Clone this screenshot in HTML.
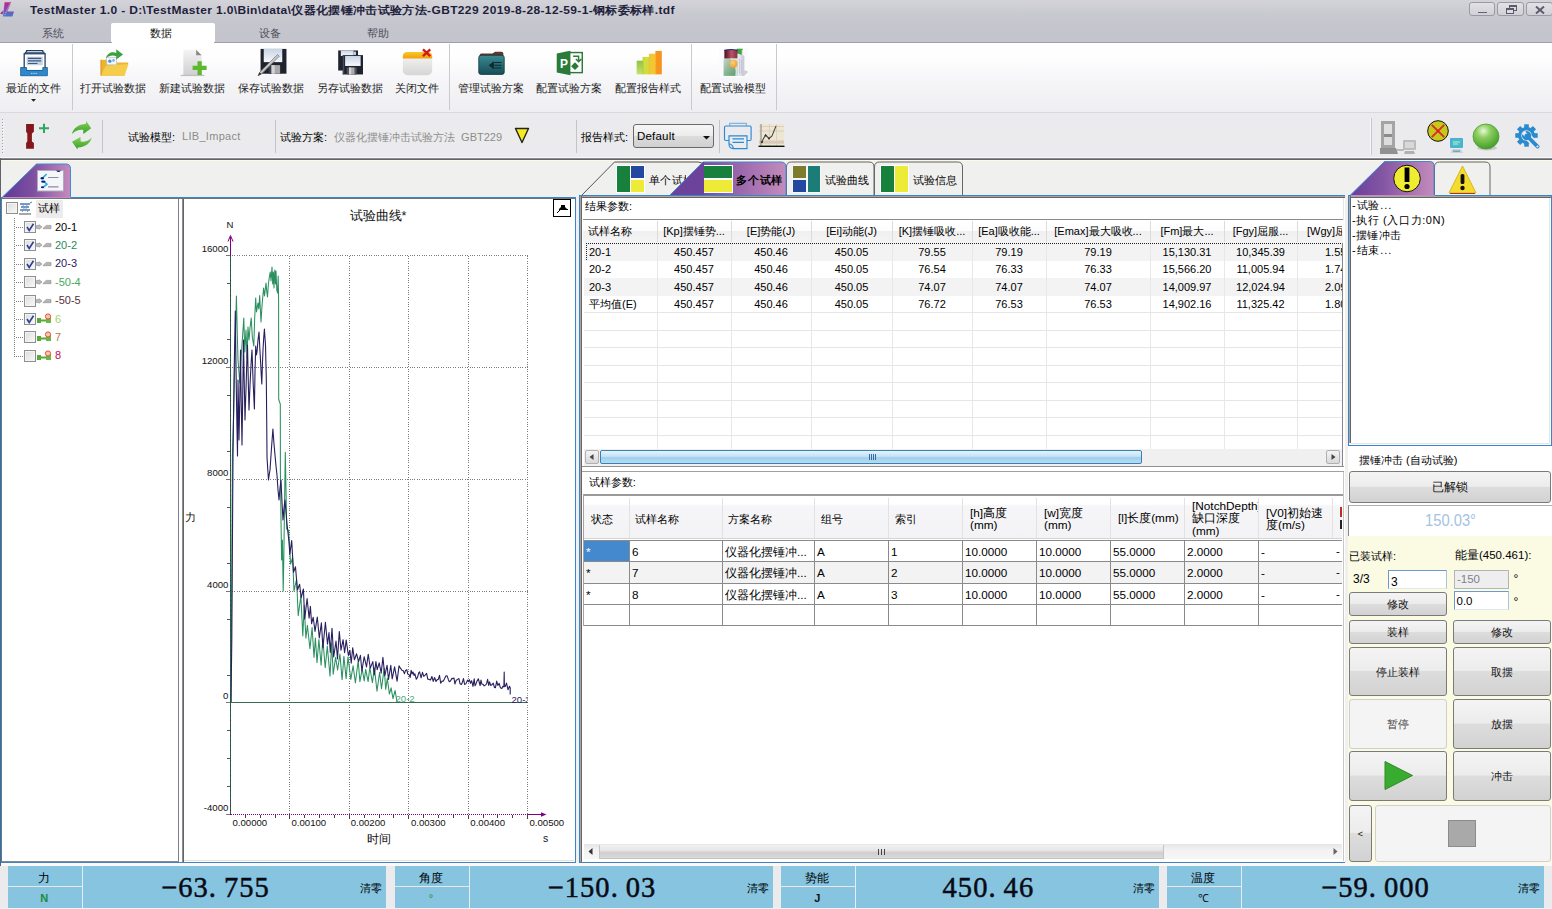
<!DOCTYPE html>
<html><head><meta charset="utf-8">
<style>
*{box-sizing:border-box;margin:0;padding:0}
html,body{width:1552px;height:909px;overflow:hidden;background:#f0f0ee}
body{position:relative;font-family:"Liberation Sans",sans-serif;font-size:11px;color:#000}
.a{position:absolute}
.t{position:absolute;white-space:nowrap;line-height:1}
/* ---------- title / ribbon ---------- */
#titlebar{left:0;top:0;width:1552px;height:43px;background:linear-gradient(#d3d3d9 0,#cacad1 12px,#c5c5cd 24px,#c4c4cc 43px)}
#title{left:30px;top:4.5px;font-size:11px;font-weight:bold;color:#1e1e3c;letter-spacing:.33px;transform:scaleX(1.09);transform-origin:0 0}
.wb{position:absolute;top:2px;height:14px;border:1px solid #9a9aa6;border-radius:3px;background:linear-gradient(#e2e2e6,#d0d0d6)}
.rtab{position:absolute;top:28px;font-size:11px;line-height:1;color:#4e4e5a}
#seltab{left:111px;top:23px;width:104px;height:20px;background:#fff;border-radius:2px 2px 0 0}
#ribbon{left:0;top:43px;width:1552px;height:69px;background:linear-gradient(#ffffff 0,#fefefe 22%,#f8f8fa 44%,#f3f3f6 70%,#efeff3 100%)}
#ribline{left:0;top:42px;width:1552px;height:1px;background:#a0a0ac}
.rsep{position:absolute;top:44px;width:1px;height:66px;background:#c9c9d0}
.rlab{position:absolute;top:83px;font-size:12px;color:#222;white-space:nowrap;line-height:1;transform:translateX(-50%)}
#toolbar{left:0;top:112px;width:1552px;height:46px;background:#ebebed;border-top:1px solid #d8d8de}
#tbline{left:0;top:157px;width:1552px;height:4px;background:linear-gradient(#f8f8f8 0 1px,#8a8c90 1px 2px,#606468 2px 3px,#fdf8e8 3px 4px)}
.tsep{position:absolute;top:120px;width:1px;height:33px;background:#c4c4c8}
/* ---------- panels ---------- */
.panel{position:absolute;background:#fff}
/* ---------- tables ---------- */
.c{position:absolute;white-space:nowrap;line-height:1;font-size:11px}
/* ---------- buttons ---------- */
.btn{position:absolute;border:1px solid #7a7a7a;border-radius:3px;background:linear-gradient(#f4f4f4 0,#ececec 48%,#dddddd 50%,#d2d2d2 100%);text-align:center;font-size:12px;color:#111}
.btn span{position:absolute;left:0;right:0;top:50%;transform:translateY(-50%);line-height:1}
/* ---------- status bar ---------- */
.sb{position:absolute;top:866px;height:42px;background:#86c4e0}
.sbl{position:absolute;font-size:12px;line-height:1;transform:translateX(-50%);white-space:nowrap}
.sbv{position:absolute;top:873.6px;font-family:"Liberation Serif",serif;font-size:28.5px;line-height:1;white-space:nowrap;letter-spacing:1.1px;color:#0a0a14;-webkit-text-stroke:.5px #0a0a14}
</style></head><body>

<!-- ======= TITLE BAR ======= -->
<div class="a" id="titlebar"></div>
<svg class="a" style="left:0;top:0" width="18" height="19" viewBox="0 0 18 19">
<defs><linearGradient id="lg1" x1="0" y1="0" x2="0" y2="1"><stop offset="0" stop-color="#b8288c"/><stop offset=".5" stop-color="#8a48b0"/><stop offset="1" stop-color="#3a80c8"/></linearGradient></defs>
<path d="M4.6 2.3 L11.2 2.3 L7.4 11.6 L14 11.6 L12.4 16.6 L3 16.6 Z" fill="url(#lg1)"/>
<path d="M0 13.6 L3.6 10.2 L2.6 14.6Z" fill="#a83098"/>
<path d="M10.2 3 L4.4 16.2" stroke="#fff" stroke-width=".8" stroke-dasharray="1 1" opacity=".85"/>
</svg>
<div class="t" id="title">TestMaster 1.0 - D:\TestMaster 1.0\Bin\data\仪器化摆锤冲击试验方法-GBT229 2019-8-28-12-59-1-钢标委标样.tdf</div>
<div class="wb" style="left:1469px;width:26px"><div class="a" style="left:8px;top:8.5px;width:9px;height:1.5px;background:#626272"></div></div>
<div class="wb" style="left:1497px;width:27px">
 <div class="a" style="left:11px;top:2px;width:8px;height:6px;border:1px solid #5a5a6a;border-top-width:2px"></div>
 <div class="a" style="left:8px;top:5px;width:8px;height:6px;border:1px solid #5a5a6a;border-top-width:2px;background:#dcdce2"></div>
</div>
<div class="wb" style="left:1526px;width:27px"><svg class="a" style="left:8px;top:3px" width="10" height="8" viewBox="0 0 10 8"><path d="M1 .5 L9 7.5 M9 .5 L1 7.5" stroke="#5a5a6a" stroke-width="1.9"/></svg></div>
<div class="a" id="seltab"></div>
<div class="rtab" style="left:42px">系统</div>
<div class="rtab" style="left:150px;color:#111">数据</div>
<div class="rtab" style="left:259px">设备</div>
<div class="rtab" style="left:367px">帮助</div>
<div class="a" id="ribline"></div>
<div class="a" style="left:112px;top:42px;width:102px;height:1px;background:#fff"></div>

<!-- ======= RIBBON ======= -->
<div class="a" id="ribbon"></div>
<div class="rsep" style="left:72px"></div>
<div class="rsep" style="left:449px"></div>
<div class="rsep" style="left:691px"></div>
<div class="rsep" style="left:776px"></div>
<div class="rlab" style="left:33px;font-size:11px">最近的文件</div>
<div class="rlab" style="left:113px;font-size:11px">打开试验数据</div>
<div class="rlab" style="left:192px;font-size:11px">新建试验数据</div>
<div class="rlab" style="left:271px;font-size:11px">保存试验数据</div>
<div class="rlab" style="left:349.5px;font-size:11px">另存试验数据</div>
<div class="rlab" style="left:417px;font-size:11px">关闭文件</div>
<div class="rlab" style="left:491px;font-size:11px">管理试验方案</div>
<div class="rlab" style="left:569px;font-size:11px">配置试验方案</div>
<div class="rlab" style="left:648px;font-size:11px">配置报告样式</div>
<div class="rlab" style="left:733px;font-size:11px">配置试验模型</div>
<svg class="a" style="left:31.3px;top:99.3px" width="5" height="3"><path d="M0 0H5L2.5 2.8Z" fill="#222"/></svg>
<svg class="a" style="left:17.299999999999997px;top:48.0px" width="31" height="31" viewBox="0 0 34 34"><path d="M10.5 6.5 V2.7 H28.3 V6.5" stroke="#1e3c64" fill="#fff" stroke-width="1.2"/><path d="M9.2 6.5 V4.6 H29.6 V6.5" stroke="#1e3c64" fill="#fff" stroke-width="1.2"/>
<rect x="7.9" y="6.3" width="22.9" height="18.7" fill="#fff" stroke="#1e3c64" stroke-width="1.4"/><rect x="10.5" y="9.5" width="17.8" height="9.4" fill="#c6d2e0"/>
<path d="M12 11.4 H26.5 M12 14.2 H26.5 M12 17 H22.5" stroke="#3a5a84" stroke-width="1.3"/>
<path d="M4 21.4 H10.5 V24.6 H28.3 V21.4 H33.3 V30.4 H4Z" fill="#2a8ad0" stroke="#1e5a90" stroke-width=".9"/><rect x="15.6" y="27.3" width="1.2" height="1.1" fill="#d6ebf8"/><rect x="18" y="27.3" width="1.2" height="1.1" fill="#d6ebf8"/><rect x="20.4" y="27.3" width="1.2" height="1.1" fill="#d6ebf8"/></svg>
<svg class="a" style="left:97.5px;top:48.0px" width="31" height="31" viewBox="0 0 34 34"><path d="M3 13 L3 30.4 L29 30.4 L33.4 16 L14 16 L12 13Z" fill="#e9b62e"/>
<rect x="9.5" y="10.5" width="11" height="8" fill="#f2f6fa" stroke="#a8b4c0" stroke-width=".6"/><circle cx="13" cy="14.5" r="1.8" fill="#4a90d0"/><circle cx="17" cy="13.6" r="1.4" fill="#7ab0e0"/>
<path d="M3 30.4 L8.5 19.5 L33.4 17.5 L29 30.4Z" fill="#f5cc4c"/><path d="M3.3 13 V30" stroke="#e08a20" stroke-width="1"/>
<path d="M8.5 11 C10.5 5 16 3.5 20 5.5 L20 1.5 L27.5 7 L20 12.5 L20 9 C16 7.5 12 8.5 8.5 11Z" fill="#3aa040"/></svg>
<svg class="a" style="left:176.5px;top:48.0px" width="31" height="31" viewBox="0 0 34 34"><defs><linearGradient id="pg" x1="0" y1="0" x2="0" y2="1"><stop offset="0" stop-color="#f4f4f4"/><stop offset="1" stop-color="#cfcfcf"/></linearGradient></defs>
<path d="M7 2 L21 2 L27 8 L27 29.5 L7 29.5Z" fill="url(#pg)"/><path d="M21 2 L27 8 L21 8Z" fill="#8a8a8a"/><rect x="4" y="29.5" width="26" height="1.3" fill="#bdbdbd"/>
<path d="M22.5 14.5 h4.6 v5 h5.4 v4.6 h-5.4 v5.4 h-4.6 v-5.4 h-5.4 v-4.6 h5.4Z" fill="#5cb82c"/></svg>
<svg class="a" style="left:255.5px;top:48.0px" width="31" height="31" viewBox="0 0 34 34"><defs><linearGradient id="lb" x1="0" y1="0" x2="0" y2="1"><stop offset="0" stop-color="#c8d4e6"/><stop offset="1" stop-color="#f6f8fb"/></linearGradient></defs>
<rect x="5" y="1" width="28.4" height="27.2" fill="#1f232d"/><rect x="8.5" y="1" width="20.3" height="14.5" fill="url(#lb)"/>
<rect x="14" y="18.8" width="13" height="9.4" fill="#3a3f4a"/><rect x="17" y="18.8" width="9.3" height="9.4" fill="#a9a9a9"/><rect x="17" y="18.8" width="3.5" height="9.4" fill="#d4d4d4"/>
<path d="M2.2 30.3 L4 26.5 L23.6 7.2 L25.6 9 L6 28.6Z" fill="#c4c4c4" stroke="#6e6e6e" stroke-width=".7"/><path d="M2 30.6 L4 26.5 L6 28.6Z" fill="#333"/></svg>
<svg class="a" style="left:334.0px;top:48.0px" width="31" height="31" viewBox="0 0 34 34"><rect x="4.6" y="2.7" width="21.7" height="22" fill="#1f232d"/><rect x="7.5" y="2.7" width="14" height="6" fill="url(#lb)"/><rect x="21.5" y="4" width="2.6" height="3.6" fill="#c8d4e6"/>
<rect x="9.6" y="7.8" width="22.2" height="21.2" fill="#1f232d"/><rect x="9.6" y="7.8" width="1.6" height="21.2" fill="#464c5c"/><rect x="12.2" y="8.7" width="17" height="11" fill="url(#lb)"/>
<rect x="13.9" y="21.4" width="11" height="7.6" fill="#50545e"/><rect x="16.5" y="21.4" width="6" height="7.6" fill="#a9a9a9"/><rect x="16.5" y="21.4" width="2.4" height="7.6" fill="#d4d4d4"/></svg>
<svg class="a" style="left:401.5px;top:48.0px" width="31" height="31" viewBox="0 0 34 34"><defs><linearGradient id="yw" x1="0" y1="0" x2="0" y2="1"><stop offset="0" stop-color="#fbc828"/><stop offset="1" stop-color="#f0a010"/></linearGradient><linearGradient id="wb2" x1="0" y1="0" x2="0" y2="1"><stop offset="0" stop-color="#f8f8f8"/><stop offset="1" stop-color="#d6d6d6"/></linearGradient></defs>
<rect x="0.9" y="4.4" width="32.2" height="25.4" rx="5" fill="url(#wb2)"/><path d="M0.9 11.4 L0.9 9.4 Q0.9 4.4 5.9 4.4 L28.1 4.4 Q33.1 4.4 33.1 9.4 L33.1 11.4Z" fill="url(#yw)"/>
<path d="M23 1.6 L31 9 M31 1.6 L23 9" stroke="#d21a1a" stroke-width="2.6"/></svg>
<svg class="a" style="left:475.5px;top:48.0px" width="31" height="31" viewBox="0 0 34 34"><defs><linearGradient id="tf" x1="0" y1="0" x2="0" y2="1"><stop offset="0" stop-color="#3a8a92"/><stop offset="1" stop-color="#164e58"/></linearGradient></defs>
<path d="M4 8 Q4 6 6 6 L18 6 L21 4 L28 4 Q30 4 30 6 L30 9 L4 9Z" fill="#5a3a2a"/><rect x="3" y="8" width="28" height="21" rx="2.5" fill="url(#tf)" stroke="#0e3038" stroke-width=".8"/>
<path d="M14 19 L19 15 L19 23Z" fill="#0c2a30"/><path d="M19 15 V23 M20 16 H28 M20 19 H28 M20 22 H28" stroke="#0c2a30" stroke-width="1.1" fill="none"/></svg>
<svg class="a" style="left:553.5px;top:48.0px" width="31" height="31" viewBox="0 0 34 34"><rect x="12" y="5" width="19" height="22" fill="#fff" stroke="#2a7a3a" stroke-width="1.6"/><path d="M3 6 L18 3 L18 30 L3 27Z" fill="#2a7a3a"/>
<text x="6.5" y="22" font-family="Liberation Sans" font-size="13" font-weight="bold" fill="#fff">P</text>
<path d="M21 9 h6 v5 M24 12 l3 3 l3 -3" stroke="#2a7a3a" stroke-width="1.6" fill="none"/><rect x="20" y="17" width="6" height="6" transform="rotate(45 23 20)" fill="#2a7a3a"/></svg>
<svg class="a" style="left:632.5px;top:48.0px" width="31" height="31" viewBox="0 0 34 34"><defs><linearGradient id="b1" x1="0" y1="0" x2="0" y2="1"><stop offset="0" stop-color="#8cc63f"/><stop offset="1" stop-color="#c8e070"/></linearGradient></defs>
<rect x="4" y="13.9" width="7" height="15" fill="url(#b1)"/><rect x="11" y="9.8" width="7" height="19.1" fill="#d2dc3c"/><rect x="18" y="6.3" width="7" height="22.6" fill="#f4c630"/><rect x="25" y="3.2" width="6.6" height="25.7" fill="#f7941d"/>
<rect x="10.4" y="9.8" width="1.2" height="19.1" fill="#b4c83c" opacity=".7"/><rect x="17.4" y="6.3" width="1.2" height="22.6" fill="#e0c030" opacity=".7"/><rect x="24.4" y="3.2" width="1.2" height="25.7" fill="#f0a828" opacity=".8"/></svg>
<svg class="a" style="left:717.5px;top:48.0px" width="31" height="31" viewBox="0 0 34 34"><defs><linearGradient id="mr" x1="0" y1="0" x2="1" y2="0"><stop offset="0" stop-color="#4e0c1c"/><stop offset=".55" stop-color="#b85468"/><stop offset="1" stop-color="#8a2a40"/></linearGradient>
<linearGradient id="ff" x1="0" y1="0" x2="1" y2="1"><stop offset="0" stop-color="#c4d8c8"/><stop offset=".5" stop-color="#8ab494"/><stop offset="1" stop-color="#5a9a6c"/></linearGradient>
<linearGradient id="pgs" x1="0" y1="0" x2="1" y2="0"><stop offset="0" stop-color="#f2f2f8"/><stop offset="1" stop-color="#c4c4d4"/></linearGradient>
<radialGradient id="or" cx=".4" cy=".35" r=".7"><stop offset="0" stop-color="#fad080"/><stop offset="1" stop-color="#ee9a28"/></radialGradient></defs>
<rect x="1.5" y="0" width="31.6" height="31.8" fill="#fbfbfd"/>
<rect x="20.5" y=".8" width="6.7" height="10" fill="#3aa244"/><rect x="26" y="2" width="1.6" height="8" fill="#dfe8c8"/>
<rect x="7" y="2.2" width="14.4" height="9.6" fill="url(#mr)"/><path d="M7 2.6 Q14 .6 21.4 2.6" stroke="#1c2c6c" stroke-width="1.2" fill="none"/>
<path d="M21.4 6 L28.9 8.5 V30.6 H21.4Z" fill="url(#pgs)"/><path d="M23.5 12 V28 M26 13 V28" stroke="#b4b4c8" stroke-width=".7"/>
<path d="M28.9 24 L33 26 L28.9 30.6Z" fill="#b8b8b8" opacity=".7"/>
<rect x="6.1" y="11.6" width="15.3" height="19" fill="url(#ff)"/><path d="M13 11.6 H21.4 V30.6 H19 Q21 20 13 11.6Z" fill="#e8eef0" opacity=".85"/>
<circle cx="17" cy="17.4" r="4.4" fill="url(#or)"/></svg>

<!-- ======= TOOLBAR ======= -->
<div class="a" id="toolbar"></div>
<div class="a" id="tbline"></div>
<div class="a" style="left:2px;top:119px;width:1px;height:34px;background:repeating-linear-gradient(#a4a4aa 0 1px,transparent 1px 3px)"></div><div class="a" style="left:3px;top:120px;width:1px;height:34px;background:repeating-linear-gradient(#fff 0 1px,transparent 1px 3px)"></div>
<div class="tsep" style="left:102px"></div>
<div class="tsep" style="left:275px"></div>
<div class="tsep" style="left:576px"></div>
<div class="tsep" style="left:719px"></div>
<div class="a" style="left:1370px;top:118px;width:2px;height:37px;background:linear-gradient(90deg,#f6f6f8 0 1px,#c8c8cc 1px 2px)"></div>
<svg class="a" style="left:20px;top:120px" width="34" height="32" viewBox="20 120 34 32"><path transform="translate(26.1 124)" d="M0 0 H7.8 V7.8 L5.8 9.4 V17.4 L7.8 19 V24.8 H0 V19 L1.2 17.4 V9.4 L0 7.8Z" fill="#82181c"/><path d="M39 128.3 H49 M44 123.8 V133" stroke="#2aa860" stroke-width="2"/></svg>
<svg class="a" style="left:68px;top:118px" width="28" height="34" viewBox="68 118 28 34"><defs><linearGradient id="gr" x1="0" y1="0" x2="0" y2="1"><stop offset="0" stop-color="#86d05a"/><stop offset="1" stop-color="#37a026"/></linearGradient></defs>
<path d="M72 133.9 C73.5 128 78 124.6 86 123.8 L86.2 121 L91.2 128.2 L83.3 134 L83.2 129.8 C79 129.3 75.5 130.5 72 133.9Z" fill="url(#gr)"/><path d="M91.8 137.5 C90.3 143.4 85.8 146.8 77.8 147.6 L77.4 149.6 L72 141.7 L80.5 137 L80.6 141.6 C84.8 142.1 88.3 140.9 91.8 137.5Z" fill="url(#gr)"/></svg>
<div class="t" style="left:128px;top:132px;font-size:11px">试验模型:</div>
<div class="t" style="left:182px;top:131px;font-size:11px;color:#8c8c8c;letter-spacing:.3px">LIB_Impact</div>
<div class="t" style="left:280px;top:132px;font-size:11px">试验方案:</div>
<div class="t" style="left:334px;top:132px;font-size:11px;color:#8c8c8c">仪器化摆锤冲击试验方法&nbsp; GBT229</div>
<svg class="a" style="left:514px;top:127px" width="16" height="17"><path d="M1.5 1.5 H14.5 L8 15.5Z" fill="#f4ec1c" stroke="#222" stroke-width="1.4" stroke-linejoin="round"/></svg>
<div class="t" style="left:581px;top:132px;font-size:11px">报告样式:</div>
<div class="a" style="left:633px;top:124px;width:81px;height:24px;border:1px solid #6a6a6a;border-radius:3px;background:linear-gradient(#f6f6f6 0,#ececec 48%,#dcdcdc 52%,#d0d0d0 100%)"><div class="t" style="left:3px;top:6px;font-size:11.5px;letter-spacing:.2px">Default</div><svg class="a" style="left:69px;top:11px" width="7" height="4"><path d="M0 0H7L3.5 3.6Z" fill="#111"/></svg></div>
<svg class="a" style="left:723px;top:122px" width="30" height="29" viewBox="0 0 30 29"><g fill="none" stroke="#2a8ad4" stroke-width="1.15"><path d="M6.6 4 V1.4 H23.4 V4" opacity=".55"/><rect x="1.5" y="4" width="26.6" height="14.5" rx="1.2"/><path d="M6 13.9 H24 V26.6 H10.5 Q6 26.4 6 22Z" fill="#ebebed"/><path d="M9.5 16.9 H21 M9.5 20.4 H21"/><path d="M6 22 Q9.5 22 10.5 26.6"/></g></svg>
<svg class="a" style="left:758px;top:123px" width="27" height="26" viewBox="0 0 27 26"><rect x="1" y="1" width="25" height="22" fill="#ece6d2"/><rect x="1" y="17.5" width="25" height="3.2" fill="#dcc8b8"/><path d="M1 3.5 H26 M1 8 H26" stroke="#dcc8b8" stroke-width=".8"/><path d="M11.5 1 V23 M18.5 1 V23" stroke="#d8cdb8" stroke-width=".8"/><path d="M3 1 V23" stroke="#8a8478" stroke-width="1"/><path d="M3.5 20 L4.5 17.5 L7.5 12 L9 13.5 L11 15.5 L14 13 L18 3" stroke="#4a4a4a" stroke-width="1.1" fill="none"/><circle cx="7.7" cy="12.4" r="1" fill="#333"/><circle cx="11" cy="15.5" r="1" fill="#333"/><circle cx="4" cy="19" r="1.1" fill="#333"/><rect x="0.5" y="22.6" width="26" height="1.4" fill="#111"/></svg>
<svg class="a" style="left:1379px;top:120px" width="40" height="36" viewBox="0 0 40 36"><rect x="2" y="1" width="14" height="27" fill="#a4a4a4"/><rect x="5" y="4" width="8" height="10" fill="#e0e0e0"/><rect x="5" y="17" width="8" height="8" fill="#dcdcdc"/><rect x="5" y="14" width="8" height="3" fill="#8c8c8c"/><path d="M1 28 H17 L19 34 H1Z" fill="#909090"/>
<path d="M17 30 H25" stroke="#999" stroke-width="1.2"/><rect x="24" y="20" width="13" height="10" rx="1" fill="#bcbcbc"/><rect x="26" y="22" width="9" height="6" fill="#d8d8d8"/><path d="M26 31 H35 L36 34 H25Z" fill="#b0b0b0"/></svg>
<svg class="a" style="left:1426px;top:119px" width="42" height="36" viewBox="0 0 42 36"><circle cx="12" cy="12" r="10.3" fill="#c8c81c" stroke="#111" stroke-width="1"/><path d="M5.8 5.8 L18.2 18.2 M18.2 5.8 L5.8 18.2" stroke="#e8201c" stroke-width="1.9"/><path d="M5.8 5.8 L18.2 18.2 M18.2 5.8 L5.8 18.2" stroke="#2aa0a0" stroke-width=".6" stroke-dasharray="1 1"/><circle cx="12" cy="12" r="1.6" fill="#e8201c"/>
<rect x="24" y="19" width="13" height="10" rx="1" fill="#4ab0d8"/><rect x="26" y="21" width="9" height="6" fill="#48c0b8"/><path d="M27 23 h7 M27 25 h5" stroke="#e0f0ff" stroke-width=".8"/><path d="M26 30 H35 L37 34 H25Z" fill="#c8d4dc"/><rect x="27" y="31.5" width="7" height="1.5" fill="#7aa"/></svg>
<svg class="a" style="left:1471px;top:122px" width="30" height="30" viewBox="0 0 30 30"><defs><radialGradient id="gs" cx=".4" cy=".28" r=".75"><stop offset="0" stop-color="#e8f8d8"/><stop offset=".35" stop-color="#8ed060"/><stop offset="1" stop-color="#3e9a28"/></radialGradient></defs><ellipse cx="16" cy="26" rx="10" ry="2.5" fill="#000" opacity=".15"/><ellipse cx="15" cy="14.5" rx="13" ry="12.5" fill="url(#gs)" stroke="#4a9a30" stroke-width=".8"/></svg>
<svg class="a" style="left:1515px;top:124px" width="26" height="26" viewBox="0 0 26 26"><g transform="translate(11.5 11.5)"><g fill="#2a8ad0"><rect x="-2.3" y="-11.2" width="4.6" height="5" transform="rotate(0)"/><rect x="-2.3" y="-11.2" width="4.6" height="5" transform="rotate(45)"/><rect x="-2.3" y="-11.2" width="4.6" height="5" transform="rotate(90)"/><rect x="-2.3" y="-11.2" width="4.6" height="5" transform="rotate(135)"/><rect x="-2.3" y="-11.2" width="4.6" height="5" transform="rotate(180)"/><rect x="-2.3" y="-11.2" width="4.6" height="5" transform="rotate(225)"/><rect x="-2.3" y="-11.2" width="4.6" height="5" transform="rotate(270)"/><rect x="-2.3" y="-11.2" width="4.6" height="5" transform="rotate(315)"/><circle r="8.4"/></g><circle r="5.2" fill="#ebebed"/></g><path d="M12 12 L22.5 22.5" stroke="#ebebed" stroke-width="7" stroke-linecap="round"/><path d="M7.2 10.2 A4.6 4.6 0 1 0 10.2 7.2 L12.4 9.8 L9.8 12.4Z" fill="#2a8ad0"/><path d="M11.5 11.5 L22.6 22.6" stroke="#2a8ad0" stroke-width="3.8" stroke-linecap="round"/><circle cx="22.5" cy="22.5" r="1.1" fill="#ebebed"/></svg>

<!-- ======= LEFT ======= -->
<svg class="a" style="left:0;top:160px" width="80" height="38" viewBox="0 0 80 38"><defs><linearGradient id="pt" x1="0" y1="0" x2="1" y2="0"><stop offset="0" stop-color="#5f3a96"/><stop offset=".45" stop-color="#7d4fa0"/><stop offset="1" stop-color="#c48cbc"/></linearGradient></defs>
<path d="M2.5 37 L36.5 4 L66 4 Q70.5 4 70.5 8.5 L70.5 37Z" fill="url(#pt)"/><path d="M2.5 37 L36.5 4 L66 4 Q70.5 4 70.5 8.5 L70.5 37" fill="none" stroke="#3c8ad8" stroke-width="1"/>
<rect x="37.5" y="10.5" width="26" height="20.5" fill="#f4f6f8" stroke="#b0a8c4" stroke-width="1"/>
<path d="M48 17.5 H58.5 M48 26.8 H58.5" stroke="#9088a8" stroke-width="1.2"/>
<path d="M43 17.6 L46.6 14" stroke="#28b4d0" stroke-width="1.6"/><path d="M44 21.6 L47 24.2 L43.4 27.2" stroke="#28b4d0" stroke-width="1.6" fill="none"/>
<ellipse cx="42.3" cy="18.2" rx="1.7" ry="1.3" fill="#0c1e8c"/><ellipse cx="43.3" cy="21.6" rx="2.2" ry="1.2" fill="#0c1e8c"/><ellipse cx="42.5" cy="27.3" rx="1.6" ry="1" fill="#0c1e8c"/>
<path d="M56 10.5 Q58.5 13.5 61 10.5Z" fill="#0c1e8c"/></svg>
<div class="a" style="left:1px;top:197px;width:575px;height:666px;border:1px solid #3c84c8;background:#fff"></div>
<div class="a" style="left:3px;top:197px;width:68px;height:1px;background:#c888c0"></div>
<div class="a" style="left:2px;top:198px;width:573px;height:1px;background:#70767e"></div>
<div class="a" style="left:2px;top:861px;width:177px;height:1px;background:#8a8a8a"></div>
<div class="a" style="left:184px;top:860px;width:390px;height:1px;background:#e0e0e0"></div>
<div class="a" style="left:178px;top:199px;width:1px;height:662px;background:#7a8090"></div>
<div class="a" style="left:182px;top:199px;width:2px;height:663px;background:linear-gradient(90deg,#8c8c8c 0 1px,#666 1px 2px)"></div>
<div class="a" style="left:36px;top:200px;width:27px;height:18px;background:#ececec"></div>
<div class="a" style="left:6px;top:202.0px;width:12px;height:12px;border:1px solid #8e8f8f;background:linear-gradient(135deg,#dcdcdc,#fafafa);box-shadow:inset 0 0 0 1px #f4f4f4"></div>
<svg class="a" style="left:18px;top:201px" width="16" height="16" viewBox="0 0 16 16"><path d="M2 3 H12 M3 6 H11 M2 9 H12" stroke="#4a7ab0" stroke-width="1.4"/><path d="M4 3 Q8 7 4 11 M10 3 Q6 7 10 11" stroke="#7a9ac8" stroke-width="1" fill="none"/><path d="M1 13 H13" stroke="#8a8a8a" stroke-width="1.5"/><path d="M12 2 l2 -1" stroke="#4a7ab0"/></svg>
<div class="t" style="left:38px;top:203px;font-size:11px">试样</div>
<div class="a" style="left:14px;top:218px;width:1px;height:139px;background:repeating-linear-gradient(#808080 0 1px,transparent 1px 2px)"></div>
<div class="a" style="left:16px;top:227px;width:8px;height:1px;background:repeating-linear-gradient(90deg,#808080 0 1px,transparent 1px 2px)"></div>
<div class="a" style="left:24px;top:221.0px;width:12px;height:12px;border:1px solid #8e8f8f;background:linear-gradient(135deg,#dcdcdc,#fafafa);box-shadow:inset 0 0 0 1px #f4f4f4"></div><svg class="a" style="left:26px;top:223.0px" width="9" height="9" viewBox="0 0 9 9"><path d="M1 4 L3.2 7.5 L7.5 .8" stroke="#2e3f96" stroke-width="1.6" fill="none"/></svg>
<svg class="a" style="left:36px;top:223.0px" width="16" height="8" viewBox="0 0 16 8"><path d="M.6 2.4 H3.2 V1.8 L6 4 L3.2 6.2 V5.6 H.6Z" fill="#bcbcbc" stroke="#8a8a8a" stroke-width=".6"/><path d="M6.8 5.7 L10.2 2.4 H15 V5.7Z" fill="#b4b4b4" stroke="#8e8e8e" stroke-width=".6"/></svg>
<div class="t" style="left:55px;top:221.5px;font-size:11px;color:#000">20-1</div>
<div class="a" style="left:16px;top:245px;width:8px;height:1px;background:repeating-linear-gradient(90deg,#808080 0 1px,transparent 1px 2px)"></div>
<div class="a" style="left:24px;top:239.4px;width:12px;height:12px;border:1px solid #8e8f8f;background:linear-gradient(135deg,#dcdcdc,#fafafa);box-shadow:inset 0 0 0 1px #f4f4f4"></div><svg class="a" style="left:26px;top:241.4px" width="9" height="9" viewBox="0 0 9 9"><path d="M1 4 L3.2 7.5 L7.5 .8" stroke="#2e3f96" stroke-width="1.6" fill="none"/></svg>
<svg class="a" style="left:36px;top:241.4px" width="16" height="8" viewBox="0 0 16 8"><path d="M.6 2.4 H3.2 V1.8 L6 4 L3.2 6.2 V5.6 H.6Z" fill="#bcbcbc" stroke="#8a8a8a" stroke-width=".6"/><path d="M6.8 5.7 L10.2 2.4 H15 V5.7Z" fill="#b4b4b4" stroke="#8e8e8e" stroke-width=".6"/></svg>
<div class="t" style="left:55px;top:239.9px;font-size:11px;color:#2a8a5a">20-2</div>
<div class="a" style="left:16px;top:264px;width:8px;height:1px;background:repeating-linear-gradient(90deg,#808080 0 1px,transparent 1px 2px)"></div>
<div class="a" style="left:24px;top:257.8px;width:12px;height:12px;border:1px solid #8e8f8f;background:linear-gradient(135deg,#dcdcdc,#fafafa);box-shadow:inset 0 0 0 1px #f4f4f4"></div><svg class="a" style="left:26px;top:259.8px" width="9" height="9" viewBox="0 0 9 9"><path d="M1 4 L3.2 7.5 L7.5 .8" stroke="#2e3f96" stroke-width="1.6" fill="none"/></svg>
<svg class="a" style="left:36px;top:259.8px" width="16" height="8" viewBox="0 0 16 8"><path d="M.6 2.4 H3.2 V1.8 L6 4 L3.2 6.2 V5.6 H.6Z" fill="#bcbcbc" stroke="#8a8a8a" stroke-width=".6"/><path d="M6.8 5.7 L10.2 2.4 H15 V5.7Z" fill="#b4b4b4" stroke="#8e8e8e" stroke-width=".6"/></svg>
<div class="t" style="left:55px;top:258.3px;font-size:11px;color:#2a2060">20-3</div>
<div class="a" style="left:16px;top:282px;width:8px;height:1px;background:repeating-linear-gradient(90deg,#808080 0 1px,transparent 1px 2px)"></div>
<div class="a" style="left:24px;top:276.2px;width:12px;height:12px;border:1px solid #8e8f8f;background:linear-gradient(135deg,#dcdcdc,#fafafa);box-shadow:inset 0 0 0 1px #f4f4f4"></div>
<svg class="a" style="left:36px;top:278.2px" width="16" height="8" viewBox="0 0 16 8"><path d="M.6 2.4 H3.2 V1.8 L6 4 L3.2 6.2 V5.6 H.6Z" fill="#bcbcbc" stroke="#8a8a8a" stroke-width=".6"/><path d="M6.8 5.7 L10.2 2.4 H15 V5.7Z" fill="#b4b4b4" stroke="#8e8e8e" stroke-width=".6"/></svg>
<div class="t" style="left:55px;top:276.7px;font-size:11px;color:#4aa860">-50-4</div>
<div class="a" style="left:16px;top:301px;width:8px;height:1px;background:repeating-linear-gradient(90deg,#808080 0 1px,transparent 1px 2px)"></div>
<div class="a" style="left:24px;top:294.6px;width:12px;height:12px;border:1px solid #8e8f8f;background:linear-gradient(135deg,#dcdcdc,#fafafa);box-shadow:inset 0 0 0 1px #f4f4f4"></div>
<svg class="a" style="left:36px;top:296.6px" width="16" height="8" viewBox="0 0 16 8"><path d="M.6 2.4 H3.2 V1.8 L6 4 L3.2 6.2 V5.6 H.6Z" fill="#bcbcbc" stroke="#8a8a8a" stroke-width=".6"/><path d="M6.8 5.7 L10.2 2.4 H15 V5.7Z" fill="#b4b4b4" stroke="#8e8e8e" stroke-width=".6"/></svg>
<div class="t" style="left:55px;top:295.1px;font-size:11px;color:#5a3040">-50-5</div>
<div class="a" style="left:16px;top:319px;width:8px;height:1px;background:repeating-linear-gradient(90deg,#808080 0 1px,transparent 1px 2px)"></div>
<div class="a" style="left:24px;top:313.0px;width:12px;height:12px;border:1px solid #8e8f8f;background:linear-gradient(135deg,#dcdcdc,#fafafa);box-shadow:inset 0 0 0 1px #f4f4f4"></div><svg class="a" style="left:26px;top:315.0px" width="9" height="9" viewBox="0 0 9 9"><path d="M1 4 L3.2 7.5 L7.5 .8" stroke="#2e3f96" stroke-width="1.6" fill="none"/></svg>
<svg class="a" style="left:36px;top:312.0px" width="16" height="13" viewBox="0 0 16 13"><rect x="1" y="6" width="4" height="5" fill="#5aa838"/><rect x="5" y="7.5" width="6" height="2" fill="#5aa838"/><rect x="10" y="5" width="5" height="6" fill="#6ab848"/><circle cx="12" cy="4.5" r="2.6" fill="#f8c8b0" stroke="#e05030" stroke-width="1"/></svg>
<div class="t" style="left:55px;top:313.5px;font-size:11px;color:#a8d070">6</div>
<div class="a" style="left:16px;top:337px;width:8px;height:1px;background:repeating-linear-gradient(90deg,#808080 0 1px,transparent 1px 2px)"></div>
<div class="a" style="left:24px;top:331.4px;width:12px;height:12px;border:1px solid #8e8f8f;background:linear-gradient(135deg,#dcdcdc,#fafafa);box-shadow:inset 0 0 0 1px #f4f4f4"></div>
<svg class="a" style="left:36px;top:330.4px" width="16" height="13" viewBox="0 0 16 13"><rect x="1" y="6" width="4" height="5" fill="#5aa838"/><rect x="5" y="7.5" width="6" height="2" fill="#5aa838"/><rect x="10" y="5" width="5" height="6" fill="#6ab848"/><circle cx="12" cy="4.5" r="2.6" fill="#f8c8b0" stroke="#e05030" stroke-width="1"/></svg>
<div class="t" style="left:55px;top:331.9px;font-size:11px;color:#c07850">7</div>
<div class="a" style="left:16px;top:356px;width:8px;height:1px;background:repeating-linear-gradient(90deg,#808080 0 1px,transparent 1px 2px)"></div>
<div class="a" style="left:24px;top:349.8px;width:12px;height:12px;border:1px solid #8e8f8f;background:linear-gradient(135deg,#dcdcdc,#fafafa);box-shadow:inset 0 0 0 1px #f4f4f4"></div>
<svg class="a" style="left:36px;top:348.8px" width="16" height="13" viewBox="0 0 16 13"><rect x="1" y="6" width="4" height="5" fill="#5aa838"/><rect x="5" y="7.5" width="6" height="2" fill="#5aa838"/><rect x="10" y="5" width="5" height="6" fill="#6ab848"/><circle cx="12" cy="4.5" r="2.6" fill="#f8c8b0" stroke="#e05030" stroke-width="1"/></svg>
<div class="t" style="left:55px;top:350.3px;font-size:11px;color:#c01050">8</div>

<!-- ======= CHART ======= -->
<svg class="a" style="left:183px;top:198px" width="392" height="662" viewBox="183 198 392 662" font-family="Liberation Sans, sans-serif"><path d="M232 255.5 H528" stroke="#7a7a7a" stroke-width="1" stroke-dasharray="1 1.4" shape-rendering="crispEdges"/><path d="M232 367.5 H528" stroke="#7a7a7a" stroke-width="1" stroke-dasharray="1 1.4" shape-rendering="crispEdges"/><path d="M232 479.5 H528" stroke="#7a7a7a" stroke-width="1" stroke-dasharray="1 1.4" shape-rendering="crispEdges"/><path d="M232 591.5 H528" stroke="#7a7a7a" stroke-width="1" stroke-dasharray="1 1.4" shape-rendering="crispEdges"/><path d="M289.5 256 V814" stroke="#7a7a7a" stroke-width="1" stroke-dasharray="1 1.4" shape-rendering="crispEdges"/><path d="M349.5 256 V814" stroke="#7a7a7a" stroke-width="1" stroke-dasharray="1 1.4" shape-rendering="crispEdges"/><path d="M408.5 256 V814" stroke="#7a7a7a" stroke-width="1" stroke-dasharray="1 1.4" shape-rendering="crispEdges"/><path d="M468.5 256 V814" stroke="#7a7a7a" stroke-width="1" stroke-dasharray="1 1.4" shape-rendering="crispEdges"/><path d="M527.5 256 V814" stroke="#7a7a7a" stroke-width="1" stroke-dasharray="1 1.4" shape-rendering="crispEdges"/><path d="M230.5 237 V815" stroke="#800080" stroke-width="1" shape-rendering="crispEdges"/><path d="M230.5 256 V814" stroke="#1a6e3a" stroke-width="1" stroke-dasharray="4 1" shape-rendering="crispEdges"/><path d="M228 241.5 L230.5 235.5 L233 241.5" stroke="#800080" stroke-width="1" fill="none"/><path d="M231 814.5 H528" stroke="#800080" stroke-width="1" stroke-dasharray="1 1" shape-rendering="crispEdges"/><path d="M528 814.5 H544" stroke="#800080" stroke-width="1" shape-rendering="crispEdges"/><path d="M541 812.3 L546.5 814.5 L541 816.7Z" fill="#800080"/><path d="M226 255.5 H230" stroke="#777" stroke-width="1" shape-rendering="crispEdges"/><path d="M226 367.5 H230" stroke="#777" stroke-width="1" shape-rendering="crispEdges"/><path d="M226 479.5 H230" stroke="#777" stroke-width="1" shape-rendering="crispEdges"/><path d="M226 591.5 H230" stroke="#777" stroke-width="1" shape-rendering="crispEdges"/><path d="M226 702.5 H230" stroke="#777" stroke-width="1" shape-rendering="crispEdges"/><path d="M226 814.5 H230" stroke="#777" stroke-width="1" shape-rendering="crispEdges"/><path d="M227 283.5 H230" stroke="#555" stroke-width="1" shape-rendering="crispEdges"/><path d="M227 339.5 H230" stroke="#555" stroke-width="1" shape-rendering="crispEdges"/><path d="M227 395.5 H230" stroke="#555" stroke-width="1" shape-rendering="crispEdges"/><path d="M227 451.5 H230" stroke="#555" stroke-width="1" shape-rendering="crispEdges"/><path d="M227 507.5 H230" stroke="#555" stroke-width="1" shape-rendering="crispEdges"/><path d="M227 563.5 H230" stroke="#555" stroke-width="1" shape-rendering="crispEdges"/><path d="M227 619.5 H230" stroke="#555" stroke-width="1" shape-rendering="crispEdges"/><path d="M227 675.5 H230" stroke="#555" stroke-width="1" shape-rendering="crispEdges"/><path d="M227 730.5 H230" stroke="#555" stroke-width="1" shape-rendering="crispEdges"/><path d="M227 758.5 H230" stroke="#555" stroke-width="1" shape-rendering="crispEdges"/><path d="M227 786.5 H230" stroke="#555" stroke-width="1" shape-rendering="crispEdges"/><path d="M245.5 815 V818" stroke="#444" stroke-width="1" shape-rendering="crispEdges"/><path d="M260.5 815 V818" stroke="#444" stroke-width="1" shape-rendering="crispEdges"/><path d="M275.5 815 V818" stroke="#444" stroke-width="1" shape-rendering="crispEdges"/><path d="M289.5 815 V819" stroke="#444" stroke-width="1" shape-rendering="crispEdges"/><path d="M304.5 815 V818" stroke="#444" stroke-width="1" shape-rendering="crispEdges"/><path d="M319.5 815 V818" stroke="#444" stroke-width="1" shape-rendering="crispEdges"/><path d="M334.5 815 V818" stroke="#444" stroke-width="1" shape-rendering="crispEdges"/><path d="M349.5 815 V819" stroke="#444" stroke-width="1" shape-rendering="crispEdges"/><path d="M364.5 815 V818" stroke="#444" stroke-width="1" shape-rendering="crispEdges"/><path d="M379.5 815 V818" stroke="#444" stroke-width="1" shape-rendering="crispEdges"/><path d="M393.5 815 V818" stroke="#444" stroke-width="1" shape-rendering="crispEdges"/><path d="M408.5 815 V819" stroke="#444" stroke-width="1" shape-rendering="crispEdges"/><path d="M423.5 815 V818" stroke="#444" stroke-width="1" shape-rendering="crispEdges"/><path d="M438.5 815 V818" stroke="#444" stroke-width="1" shape-rendering="crispEdges"/><path d="M453.5 815 V818" stroke="#444" stroke-width="1" shape-rendering="crispEdges"/><path d="M468.5 815 V819" stroke="#444" stroke-width="1" shape-rendering="crispEdges"/><path d="M483.5 815 V818" stroke="#444" stroke-width="1" shape-rendering="crispEdges"/><path d="M497.5 815 V818" stroke="#444" stroke-width="1" shape-rendering="crispEdges"/><path d="M512.5 815 V818" stroke="#444" stroke-width="1" shape-rendering="crispEdges"/><path d="M527.5 815 V819" stroke="#444" stroke-width="1" shape-rendering="crispEdges"/><text x="228.4" y="252.0" font-size="9.6" text-anchor="end" fill="#111">16000</text><text x="228.4" y="364.0" font-size="9.6" text-anchor="end" fill="#111">12000</text><text x="228.4" y="476.0" font-size="9.6" text-anchor="end" fill="#111">8000</text><text x="228.4" y="588.0" font-size="9.6" text-anchor="end" fill="#111">4000</text><text x="228.4" y="699.0" font-size="9.6" text-anchor="end" fill="#111">0</text><text x="228.4" y="811.0" font-size="9.6" text-anchor="end" fill="#111">-4000</text><text x="232.5" y="826" font-size="9.6" fill="#111">0.00000</text><text x="291.5" y="826" font-size="9.6" fill="#111">0.00100</text><text x="350.7" y="826" font-size="9.6" fill="#111">0.00200</text><text x="410.9" y="826" font-size="9.6" fill="#111">0.00300</text><text x="470.3" y="826" font-size="9.6" fill="#111">0.00400</text><text x="529.5" y="826" font-size="9.6" fill="#111">0.00500</text><text x="230" y="228" font-size="9.6" text-anchor="middle" fill="#111">N</text><text x="545.5" y="842" font-size="10.5" text-anchor="middle" fill="#111">s</text><text x="378" y="219.5" font-size="12.5" text-anchor="middle" fill="#111">试验曲线*</text><text x="378.5" y="843" font-size="11.5" text-anchor="middle" fill="#111">时间</text><text x="190.5" y="521" font-size="11" text-anchor="middle" fill="#111">力</text><path d="M231 702.5 H528" stroke="#3a6a50" stroke-width="1" shape-rendering="crispEdges"/><polyline fill="none" stroke="#2a9060" stroke-width="1.05" stroke-linejoin="round" points="231,702 231.6,600 232.4,456 233.5,420 236.4,296 237.2,330 238,360 239.8,383 241,360 243.8,318 244.8,352 246,330 247,358 248,327 249,340 250,328 251.2,318 252.4,338 253.8,346 254.6,320 255.7,298 256.5,312 258,303 258.8,309 259.7,295.5 260.4,310 261,322 262,306 263.6,288 264.5,296 266,283 266.8,292 267.5,297 268.4,284 269.2,278 270.2,272 271,281 272,267 272.7,284 273.4,272 274,288 274.8,270 275.5,284 276,271 276.8,290 277.6,293 278.2,276 278.6,300 278.7,399 279.5,402 280.3,404 280.4,473 281,520 281.6,560 282.4,540 283.2,591 283.8,558.5 285.3,452.2 286.7,529.0 288.6,530.5 290.6,564.1 292.6,557.7 294.0,591.0 296.6,579.2 298.2,615.6 300.9,595.9 302.8,636.0 304.2,605.5 305.9,638.1 307.4,625.2 309.9,648.8 312.1,627.6 314.0,657.4 315.4,638.1 317.0,662.6 318.9,639.5 321.1,665.2 322.8,638.7 325.2,667.8 327.3,646.1 330.0,676.3 331.7,642.8 333.2,674.2 335.6,657.4 337.6,670.0 339.9,654.1 342.1,679.7 343.9,656.3 346.1,678.6 348.0,656.7 350.8,679.5 353.1,665.8 355.4,682.9 358.2,660.5 359.9,681.7 362.2,668.8 364.2,680.9 365.7,669.4 368.1,681.6 369.8,667.5 372.4,682.6 374.4,667.9 377.0,691.2 379.6,672.4 381.5,688.8 384.2,668.1 385.7,689.5 387.3,678.3 389.4,694.1 391.1,687.8 393.0,698.7 395.1,690.5 397,702"/><polyline fill="none" stroke="#28205e" stroke-width="1.1" stroke-linejoin="round" points="231,702 231.8,640 232.3,560 233,456 234,380 235.3,311 235.9,360 236.5,400 237,430 237.5,456 238,380 238.6,410 239,440 239.8,400 240.5,350 241.2,400 242,445 242.8,390 243.5,340 244.3,385 245,420 245.6,400 246,390 246.8,362 247.5,345 248.3,382 249,410 249.8,390 250.5,375 251.3,360 252,350 253.2,384 254.4,409 255,372 255.7,346 256.4,355 257,352 258,340 259,332 259.8,348 260.5,360 261.2,374 261.8,384 262.4,365 263,350 263.7,338 264.4,329 265,338 265.5,345 265.9,362 266.3,378 266.7,420 267,457 267.8,470 268.5,480 269.3,474 270,470 271.5,448 272.9,429 274,444 275,455 276,466 277,475 278,490 279,500 280,488 281,480 282,502 283,520 284,508 285,500 287,524 289,542 289.8,554.2 291.7,540.6 293.5,572.2 295.5,566.8 297.4,590.0 299.6,584.2 301.2,597.7 303.4,589.0 304.7,618.9 307.1,598.5 309.1,618.2 310.4,606.4 311.6,623.6 313.2,617.2 315.0,631.4 317.3,617.0 319.3,638.0 321.4,622.9 322.9,647.9 325.4,622.3 327.5,644.3 329.0,632.6 330.3,652.4 332.0,628.2 333.7,657.0 336.0,641.0 337.5,658.9 339.3,631.5 341.0,650.2 343.1,639.7 344.6,652.7 346.2,640.1 348.4,655.5 349.9,650.2 351.2,663.2 352.7,647.7 354.4,659.8 356.6,653.8 358.6,661.6 360.4,655.3 361.9,671.0 364.2,656.7 366.5,667.0 368.2,654.2 370.3,668.1 372.8,661.6 374.3,675.0 375.9,661.6 377.2,669.7 379.2,662.8 381.2,673.1 382.9,657.4 384.8,675.7 387.1,665.2 388.5,679.5 390.8,665.4 392.2,678.9 394.6,666.8 397.1,681.3 399.0,665.9 400.4,668.2 401.9,670.2 403.2,670.6 404.5,673.7 405.5,670.4 406.8,669.7 407.8,674.1 409.2,674.8 410.2,677.5 411.1,670.2 412.1,674.0 413.0,671.9 414.0,675.4 414.9,673.8 416.3,679.3 417.6,677.1 418.8,672.7 419.6,671.9 421.1,677.8 422.5,672.4 423.8,676.4 425.1,675.2 426.6,673.4 427.8,679.2 429.2,679.4 430.5,680.0 431.9,676.5 433.2,681.4 434.6,677.5 436.0,681.5 437.2,679.6 438.3,679.4 439.5,675.4 440.7,683.2 442.1,681.1 443.2,681.3 444.4,679.0 445.8,676.1 447.1,675.8 448.4,679.7 449.3,681.7 450.5,681.1 451.9,678.2 452.7,678.7 454.0,678.0 454.9,684.0 456.2,680.2 457.6,679.4 458.9,678.5 460.0,683.7 461.4,684.5 462.5,682.1 463.5,678.5 464.6,684.5 466.0,683.6 467.5,680.1 468.4,681.6 469.4,679.7 470.5,683.3 471.6,680.7 473.0,686.4 474.2,678.9 475.0,685.7 475.8,684.4 477.0,681.1 478.4,678.8 479.3,682.5 480.1,685.7 481.0,680.0 481.9,684.2 483.0,684.3 484.2,685.9 485.7,684.9 486.7,683.2 487.6,679.4 488.7,685.4 489.6,681.8 490.7,685.4 491.8,684.8 493.2,683.1 494.5,687.5 495.4,687.8 496.7,681.1 497.8,685.4 499.2,683.4 500.4,687.8 501.8,688.5 502.9,686.2 503.9,686.9 504.2,672 504.4,686 505.2,686.5 506.5,683.1 508.0,689.7 509.5,686.2 510.2,688 510.2,694.4"/><text x="395.5" y="702" font-size="9.6" fill="#4aa880">20-2</text><text x="511.5" y="703" font-size="9.6" fill="#28205e">20-3</text><rect x="527.8" y="690" width="30" height="20" fill="#fff"/></svg>
<div class="a" style="left:553px;top:199px;width:18px;height:18px;border:1px solid #000;background:#fff"><svg class="a" style="left:2px;top:3px" width="13" height="11" viewBox="0 0 13 11"><path d="M1 10 L5 6" stroke="#000" stroke-width="1"/><path d="M5 2 H9 V4 L11 6 H3 L5 4Z" fill="#000"/><path d="M3 6.5 H12" stroke="#000" stroke-width="1"/></svg></div>

<!-- ======= CENTER ======= -->
<svg class="a" style="left:577px;top:158px" width="400" height="40" viewBox="577 158 400 40"><defs><linearGradient id="pt2" x1="0" y1="0" x2="1" y2="0"><stop offset="0" stop-color="#68409a"/><stop offset=".3" stop-color="#7a4ca0"/><stop offset="1" stop-color="#c48cbc"/></linearGradient></defs>
<path d="M581.5 195.5 L614.5 162 L698 162 Q702 162 704 165" fill="none" stroke="#555" stroke-width="1"/>
<path d="M786.5 195.5 V167 Q786.5 162 791.5 162 L869 162 Q874 162 874 167 V195.5" fill="#f0f0ee" stroke="#666" stroke-width="1"/>
<path d="M874.5 195.5 V167 Q874.5 162 879.5 162 L957.5 162 Q962.5 162 962.5 167 V195.5" fill="#f0f0ee" stroke="#666" stroke-width="1"/>
<path d="M669.5 195.5 L703 162 L781 162 Q786 162 786 167 L786 195.5Z" fill="url(#pt2)" stroke="#3c8ad8" stroke-width="1"/>
</svg>
<div class="a" style="left:616px;top:165px;width:29px;height:28px;background:#fff"></div><div class="a" style="left:617px;top:166px;width:13px;height:26px;background:#17803c"></div><div class="a" style="left:631px;top:166px;width:13px;height:12px;background:#2448a0"></div><div class="a" style="left:631px;top:180px;width:13px;height:12px;background:#eeea38"></div>
<div class="a" style="left:703px;top:165px;width:30px;height:28px;background:#fff"></div><div class="a" style="left:704px;top:166px;width:28px;height:12px;background:#17803c"></div><div class="a" style="left:704px;top:180px;width:28px;height:12px;background:#eeea38"></div>
<div class="a" style="left:792px;top:165px;width:29px;height:28px;background:#f6f6f6"></div><div class="a" style="left:793px;top:166px;width:13px;height:12px;background:#7c7c2c"></div><div class="a" style="left:793px;top:180px;width:13px;height:12px;background:#2448a0"></div><div class="a" style="left:808px;top:166px;width:12px;height:26px;background:#1c7c78"></div>
<div class="a" style="left:880px;top:165px;width:29px;height:28px;background:#fff"></div><div class="a" style="left:881px;top:166px;width:13px;height:26px;background:#17803c"></div><div class="a" style="left:895px;top:166px;width:13px;height:26px;background:#eeea38"></div>
<div class="a" style="left:648px;top:172px;width:38px;height:18px;overflow:hidden"><div class="t" style="left:1px;top:2.5px;font-size:11px;letter-spacing:.25px">单个试样</div></div>
<svg class="a" style="left:660px;top:160px" width="50" height="37" viewBox="660 160 50 37"><path d="M669.5 195.5 L703 162 L704 162 L704 195.5Z" fill="#6c429a"/><path d="M669.5 195.5 L703 162" stroke="#3c8ad8" stroke-width="1"/></svg>
<div class="t" style="left:736px;top:174.5px;font-size:11px;font-weight:bold;letter-spacing:.75px">多个试样</div>
<div class="t" style="left:824.5px;top:174.5px;font-size:11px;letter-spacing:.25px">试验曲线</div>
<div class="t" style="left:912.7px;top:174.5px;font-size:11px;letter-spacing:.15px">试验信息</div>
<div class="a" style="left:579px;top:195px;width:766px;height:668px;background:#fff;border:1px solid #3c84c8;border-right:0"></div>
<div class="a" style="left:580px;top:196px;width:765px;height:2px;background:linear-gradient(#a8a2a2 0 1px,#666 1px 2px)"></div>
<div class="a" style="left:580px;top:196px;width:2px;height:666px;background:linear-gradient(90deg,#a8a2a2 0 1px,#666 1px 2px)"></div>
<div class="a" style="left:1343px;top:198px;width:1px;height:22px;background:#e6e6e6"></div>
<div class="a" style="left:1342px;top:220px;width:1px;height:247px;background:#808890"></div>
<div class="t" style="left:585px;top:201px;font-size:11px">结果参数:</div>
<div class="a" style="left:583px;top:219px;width:760px;height:1px;background:#8a8a8a"></div>
<div class="a" style="left:583px;top:220px;width:760px;height:23px;background:linear-gradient(#fff 0,#fdfdfd 45%,#f0f0f0 50%,#f4f4f4 100%)"></div>
<div class="a" style="left:584px;top:243.0px;width:758px;height:17.5px;background:#f3f3f3"></div>
<div class="a" style="left:584px;top:278.0px;width:758px;height:17.5px;background:#f3f3f3"></div>
<div class="a" style="left:584px;top:312px;width:758px;height:1px;background:#e6e6e6"></div>
<div class="a" style="left:584px;top:330px;width:758px;height:1px;background:#e6e6e6"></div>
<div class="a" style="left:584px;top:347px;width:758px;height:1px;background:#e6e6e6"></div>
<div class="a" style="left:584px;top:365px;width:758px;height:1px;background:#e6e6e6"></div>
<div class="a" style="left:584px;top:382px;width:758px;height:1px;background:#e6e6e6"></div>
<div class="a" style="left:584px;top:400px;width:758px;height:1px;background:#e6e6e6"></div>
<div class="a" style="left:584px;top:417px;width:758px;height:1px;background:#e6e6e6"></div>
<div class="a" style="left:584px;top:435px;width:758px;height:1px;background:#e6e6e6"></div>
<div class="a" style="left:584px;top:452px;width:758px;height:1px;background:#e6e6e6"></div>
<div class="a" style="left:657.0px;top:221px;width:1px;height:21px;background:#dcdcdc"></div>
<div class="a" style="left:657.0px;top:243px;width:1px;height:207px;background:#e8e8e8"></div>
<div class="a" style="left:731.0px;top:221px;width:1px;height:21px;background:#dcdcdc"></div>
<div class="a" style="left:731.0px;top:243px;width:1px;height:207px;background:#e8e8e8"></div>
<div class="a" style="left:811.0px;top:221px;width:1px;height:21px;background:#dcdcdc"></div>
<div class="a" style="left:811.0px;top:243px;width:1px;height:207px;background:#e8e8e8"></div>
<div class="a" style="left:892.0px;top:221px;width:1px;height:21px;background:#dcdcdc"></div>
<div class="a" style="left:892.0px;top:243px;width:1px;height:207px;background:#e8e8e8"></div>
<div class="a" style="left:972.0px;top:221px;width:1px;height:21px;background:#dcdcdc"></div>
<div class="a" style="left:972.0px;top:243px;width:1px;height:207px;background:#e8e8e8"></div>
<div class="a" style="left:1046.0px;top:221px;width:1px;height:21px;background:#dcdcdc"></div>
<div class="a" style="left:1046.0px;top:243px;width:1px;height:207px;background:#e8e8e8"></div>
<div class="a" style="left:1150.0px;top:221px;width:1px;height:21px;background:#dcdcdc"></div>
<div class="a" style="left:1150.0px;top:243px;width:1px;height:207px;background:#e8e8e8"></div>
<div class="a" style="left:1224.0px;top:221px;width:1px;height:21px;background:#dcdcdc"></div>
<div class="a" style="left:1224.0px;top:243px;width:1px;height:207px;background:#e8e8e8"></div>
<div class="a" style="left:1297.0px;top:221px;width:1px;height:21px;background:#dcdcdc"></div>
<div class="a" style="left:1297.0px;top:243px;width:1px;height:207px;background:#e8e8e8"></div>
<div class="a" style="left:586px;top:243px;width:756px;height:1px;background:repeating-linear-gradient(90deg,#222 0 1px,transparent 1px 2px)"></div>
<div class="a" style="left:586px;top:243px;width:1px;height:17px;background:repeating-linear-gradient(#222 0 1px,transparent 1px 2px)"></div>
<div class="c" style="left:588px;top:226px">试样名称</div>
<div class="c" style="left:694.0px;top:226px;transform:translateX(-50%)">[Kp]摆锤势...</div>
<div class="c" style="left:771.0px;top:226px;transform:translateX(-50%)">[E]势能(J)</div>
<div class="c" style="left:851.5px;top:226px;transform:translateX(-50%)">[Ei]动能(J)</div>
<div class="c" style="left:932.0px;top:226px;transform:translateX(-50%)">[K]摆锤吸收...</div>
<div class="c" style="left:1009.0px;top:226px;transform:translateX(-50%)">[Ea]吸收能...</div>
<div class="c" style="left:1098.0px;top:226px;transform:translateX(-50%)">[Emax]最大吸收...</div>
<div class="c" style="left:1187.0px;top:226px;transform:translateX(-50%)">[Fm]最大...</div>
<div class="c" style="left:1260.5px;top:226px;transform:translateX(-50%)">[Fgy]屈服...</div>
<div class="a" style="left:1298px;top:221px;width:44px;height:21px;overflow:hidden"><div class="c" style="left:9px;top:5px">[Wgy]屈服</div></div>
<div class="c" style="left:589px;top:246.5px">20-1</div>
<div class="c" style="left:694.0px;top:246.5px;transform:translateX(-50%)">450.457</div>
<div class="c" style="left:771.0px;top:246.5px;transform:translateX(-50%)">450.46</div>
<div class="c" style="left:851.5px;top:246.5px;transform:translateX(-50%)">450.05</div>
<div class="c" style="left:932.0px;top:246.5px;transform:translateX(-50%)">79.55</div>
<div class="c" style="left:1009.0px;top:246.5px;transform:translateX(-50%)">79.19</div>
<div class="c" style="left:1098.0px;top:246.5px;transform:translateX(-50%)">79.19</div>
<div class="c" style="left:1187.0px;top:246.5px;transform:translateX(-50%)">15,130.31</div>
<div class="c" style="left:1260.5px;top:246.5px;transform:translateX(-50%)">10,345.39</div>
<div class="a" style="left:1298px;top:244.5px;width:44px;height:15px;overflow:hidden"><div class="c" style="left:27px;top:2px">1.55</div></div>
<div class="c" style="left:589px;top:264.0px">20-2</div>
<div class="c" style="left:694.0px;top:264.0px;transform:translateX(-50%)">450.457</div>
<div class="c" style="left:771.0px;top:264.0px;transform:translateX(-50%)">450.46</div>
<div class="c" style="left:851.5px;top:264.0px;transform:translateX(-50%)">450.05</div>
<div class="c" style="left:932.0px;top:264.0px;transform:translateX(-50%)">76.54</div>
<div class="c" style="left:1009.0px;top:264.0px;transform:translateX(-50%)">76.33</div>
<div class="c" style="left:1098.0px;top:264.0px;transform:translateX(-50%)">76.33</div>
<div class="c" style="left:1187.0px;top:264.0px;transform:translateX(-50%)">15,566.20</div>
<div class="c" style="left:1260.5px;top:264.0px;transform:translateX(-50%)">11,005.94</div>
<div class="a" style="left:1298px;top:262.0px;width:44px;height:15px;overflow:hidden"><div class="c" style="left:27px;top:2px">1.74</div></div>
<div class="c" style="left:589px;top:281.5px">20-3</div>
<div class="c" style="left:694.0px;top:281.5px;transform:translateX(-50%)">450.457</div>
<div class="c" style="left:771.0px;top:281.5px;transform:translateX(-50%)">450.46</div>
<div class="c" style="left:851.5px;top:281.5px;transform:translateX(-50%)">450.05</div>
<div class="c" style="left:932.0px;top:281.5px;transform:translateX(-50%)">74.07</div>
<div class="c" style="left:1009.0px;top:281.5px;transform:translateX(-50%)">74.07</div>
<div class="c" style="left:1098.0px;top:281.5px;transform:translateX(-50%)">74.07</div>
<div class="c" style="left:1187.0px;top:281.5px;transform:translateX(-50%)">14,009.97</div>
<div class="c" style="left:1260.5px;top:281.5px;transform:translateX(-50%)">12,024.94</div>
<div class="a" style="left:1298px;top:279.5px;width:44px;height:15px;overflow:hidden"><div class="c" style="left:27px;top:2px">2.09</div></div>
<div class="c" style="left:589px;top:299.0px">平均值(E)</div>
<div class="c" style="left:694.0px;top:299.0px;transform:translateX(-50%)">450.457</div>
<div class="c" style="left:771.0px;top:299.0px;transform:translateX(-50%)">450.46</div>
<div class="c" style="left:851.5px;top:299.0px;transform:translateX(-50%)">450.05</div>
<div class="c" style="left:932.0px;top:299.0px;transform:translateX(-50%)">76.72</div>
<div class="c" style="left:1009.0px;top:299.0px;transform:translateX(-50%)">76.53</div>
<div class="c" style="left:1098.0px;top:299.0px;transform:translateX(-50%)">76.53</div>
<div class="c" style="left:1187.0px;top:299.0px;transform:translateX(-50%)">14,902.16</div>
<div class="c" style="left:1260.5px;top:299.0px;transform:translateX(-50%)">11,325.42</div>
<div class="a" style="left:1298px;top:297.0px;width:44px;height:15px;overflow:hidden"><div class="c" style="left:27px;top:2px">1.80</div></div>
<div class="a" style="left:584px;top:449px;width:758px;height:17px;background:#f0f0f0"></div>
<div class="a" style="left:585px;top:450px;width:14px;height:14px;border:1px solid #b0b0b0;border-radius:2px;background:linear-gradient(#f4f4f4,#d8d8d8)"><svg class="a" style="left:3px;top:3px" width="5" height="6"><path d="M4.5 0 V6 L.5 3Z" fill="#444"/></svg></div>
<div class="a" style="left:1326px;top:450px;width:14px;height:14px;border:1px solid #b0b0b0;border-radius:2px;background:linear-gradient(#f4f4f4,#d8d8d8)"><svg class="a" style="left:4px;top:3px" width="5" height="6"><path d="M.5 0 V6 L4.5 3Z" fill="#444"/></svg></div>
<div class="a" style="left:600px;top:450px;width:542px;height:14px;border:1px solid #3c7fb1;border-radius:2px;background:linear-gradient(#e4f3fc 0,#c4e3f6 45%,#9ed0ee 55%,#b4dcf4 100%)"><div class="a" style="left:268px;top:3px;width:7px;height:6px;background:repeating-linear-gradient(90deg,#3a6a9a 0 1px,transparent 1px 2px)"></div></div>
<div class="a" style="left:582px;top:466px;width:762px;height:5px;background:#fff;border-top:1px solid #909090"></div>
<div class="a" style="left:582px;top:471px;width:762px;height:1px;background:#a0a0a0"></div>
<div class="t" style="left:588.7px;top:476.5px;font-size:11px">试样参数:</div>
<div class="a" style="left:583px;top:494px;width:760px;height:2px;background:#9a9a9a"></div>
<div class="a" style="left:584px;top:496px;width:758px;height:43px;background:linear-gradient(#fff 0,#fff 8px,#f6f6f8 10px,#f3f3f5 100%);border-bottom:1px solid #d4d4d4"></div>
<div class="a" style="left:584px;top:562px;width:758px;height:21px;background:#f3f3f3"></div>
<div class="a" style="left:584px;top:541px;width:45px;height:20px;background:#4489cd"></div>
<div class="a" style="left:584px;top:540.0px;width:758px;height:1px;background:#8a8a8a"></div>
<div class="a" style="left:584px;top:561.0px;width:758px;height:1px;background:#8a8a8a"></div>
<div class="a" style="left:584px;top:583.0px;width:758px;height:1px;background:#8a8a8a"></div>
<div class="a" style="left:584px;top:604.0px;width:758px;height:1px;background:#8a8a8a"></div>
<div class="a" style="left:584px;top:625.0px;width:758px;height:1px;background:#8a8a8a"></div>
<div class="a" style="left:583px;top:494px;width:1px;height:132px;background:#a4a4a4"></div>
<div class="a" style="left:629px;top:540px;width:1px;height:86px;background:#8a8a8a"></div>
<div class="a" style="left:722px;top:540px;width:1px;height:86px;background:#8a8a8a"></div>
<div class="a" style="left:814px;top:540px;width:1px;height:86px;background:#8a8a8a"></div>
<div class="a" style="left:888px;top:540px;width:1px;height:86px;background:#8a8a8a"></div>
<div class="a" style="left:962px;top:540px;width:1px;height:86px;background:#8a8a8a"></div>
<div class="a" style="left:1036px;top:540px;width:1px;height:86px;background:#8a8a8a"></div>
<div class="a" style="left:1110px;top:540px;width:1px;height:86px;background:#8a8a8a"></div>
<div class="a" style="left:1184px;top:540px;width:1px;height:86px;background:#8a8a8a"></div>
<div class="a" style="left:1258px;top:540px;width:1px;height:86px;background:#8a8a8a"></div>
<div class="a" style="left:629.0px;top:498px;width:1px;height:40px;background:#e2e2e2"></div>
<div class="a" style="left:722.0px;top:498px;width:1px;height:40px;background:#e2e2e2"></div>
<div class="a" style="left:814.0px;top:498px;width:1px;height:40px;background:#e2e2e2"></div>
<div class="a" style="left:888.0px;top:498px;width:1px;height:40px;background:#e2e2e2"></div>
<div class="a" style="left:962.0px;top:498px;width:1px;height:40px;background:#e2e2e2"></div>
<div class="a" style="left:1036.0px;top:498px;width:1px;height:40px;background:#e2e2e2"></div>
<div class="a" style="left:1110.0px;top:498px;width:1px;height:40px;background:#e2e2e2"></div>
<div class="a" style="left:1184.0px;top:498px;width:1px;height:40px;background:#e2e2e2"></div>
<div class="a" style="left:1258.0px;top:498px;width:1px;height:40px;background:#e2e2e2"></div>
<div class="a" style="left:1332.0px;top:498px;width:1px;height:40px;background:#e2e2e2"></div>
<div class="c" style="left:591px;top:514px;font-size:11px">状态</div>
<div class="c" style="left:635px;top:514px;font-size:11px">试样名称</div>
<div class="c" style="left:728px;top:514px;font-size:11px">方案名称</div>
<div class="c" style="left:821px;top:514px;font-size:11px">组号</div>
<div class="c" style="left:895px;top:514px;font-size:11px">索引</div>
<div class="c" style="left:970px;top:506.5px;font-size:11.8px;line-height:12.5px;white-space:normal;width:70px">[h]高度<br>(mm)</div>
<div class="c" style="left:1044px;top:506.5px;font-size:11.8px;line-height:12.5px;white-space:normal;width:70px">[w]宽度<br>(mm)</div>
<div class="c" style="left:1118px;top:513px;font-size:11.8px">[l]长度(mm)</div>
<div class="a" style="left:1185px;top:497px;width:73px;height:42px;overflow:hidden"><div class="c" style="left:7px;top:2.5px;font-size:11.8px;line-height:12.5px;white-space:normal;width:90px">[NotchDepth]<br>缺口深度<br>(mm)</div></div>
<div class="c" style="left:1266px;top:506.5px;font-size:11.8px;line-height:12.5px;white-space:normal;width:70px">[V0]初始速<br>度(m/s)</div>
<div class="a" style="left:1340px;top:507px;width:2px;height:10px;background:#c03020"></div><div class="a" style="left:1340px;top:520px;width:2px;height:9px;background:#222"></div>
<div class="c" style="left:586.0px;top:545.5px;font-size:11.7px;color:#fff">*</div>
<div class="c" style="left:632.0px;top:545.5px;font-size:11.7px;color:#000">6</div>
<div class="c" style="left:725.0px;top:545.5px;font-size:11.7px;color:#000">仪器化摆锤冲...</div>
<div class="c" style="left:817.0px;top:545.5px;font-size:11.7px;color:#000">A</div>
<div class="c" style="left:891.0px;top:545.5px;font-size:11.7px;color:#000">1</div>
<div class="c" style="left:965.0px;top:545.5px;font-size:11.7px;color:#000">10.0000</div>
<div class="c" style="left:1039.0px;top:545.5px;font-size:11.7px;color:#000">10.0000</div>
<div class="c" style="left:1113.0px;top:545.5px;font-size:11.7px;color:#000">55.0000</div>
<div class="c" style="left:1187.0px;top:545.5px;font-size:11.7px;color:#000">2.0000</div>
<div class="c" style="left:1261.0px;top:545.5px;font-size:11.7px;color:#000">-</div>
<div class="c" style="left:1336px;top:545.5px;font-size:11.5px">-</div>
<div class="c" style="left:586.0px;top:566.5px;font-size:11.7px;color:#000">*</div>
<div class="c" style="left:632.0px;top:566.5px;font-size:11.7px;color:#000">7</div>
<div class="c" style="left:725.0px;top:566.5px;font-size:11.7px;color:#000">仪器化摆锤冲...</div>
<div class="c" style="left:817.0px;top:566.5px;font-size:11.7px;color:#000">A</div>
<div class="c" style="left:891.0px;top:566.5px;font-size:11.7px;color:#000">2</div>
<div class="c" style="left:965.0px;top:566.5px;font-size:11.7px;color:#000">10.0000</div>
<div class="c" style="left:1039.0px;top:566.5px;font-size:11.7px;color:#000">10.0000</div>
<div class="c" style="left:1113.0px;top:566.5px;font-size:11.7px;color:#000">55.0000</div>
<div class="c" style="left:1187.0px;top:566.5px;font-size:11.7px;color:#000">2.0000</div>
<div class="c" style="left:1261.0px;top:566.5px;font-size:11.7px;color:#000">-</div>
<div class="c" style="left:1336px;top:566.5px;font-size:11.5px">-</div>
<div class="c" style="left:586.0px;top:588.5px;font-size:11.7px;color:#000">*</div>
<div class="c" style="left:632.0px;top:588.5px;font-size:11.7px;color:#000">8</div>
<div class="c" style="left:725.0px;top:588.5px;font-size:11.7px;color:#000">仪器化摆锤冲...</div>
<div class="c" style="left:817.0px;top:588.5px;font-size:11.7px;color:#000">A</div>
<div class="c" style="left:891.0px;top:588.5px;font-size:11.7px;color:#000">3</div>
<div class="c" style="left:965.0px;top:588.5px;font-size:11.7px;color:#000">10.0000</div>
<div class="c" style="left:1039.0px;top:588.5px;font-size:11.7px;color:#000">10.0000</div>
<div class="c" style="left:1113.0px;top:588.5px;font-size:11.7px;color:#000">55.0000</div>
<div class="c" style="left:1187.0px;top:588.5px;font-size:11.7px;color:#000">2.0000</div>
<div class="c" style="left:1261.0px;top:588.5px;font-size:11.7px;color:#000">-</div>
<div class="c" style="left:1336px;top:588.5px;font-size:11.5px">-</div>
<div class="a" style="left:1343px;top:472px;width:1px;height:389px;background:#c8c8c8"></div>
<div class="a" style="left:584px;top:844px;width:758px;height:15px;background:linear-gradient(#e6e6e6,#f2f2f2 40%,#f6f6f6)"></div>
<svg class="a" style="left:588px;top:848px" width="5" height="7"><path d="M4.5 0 V7 L.5 3.5Z" fill="#333"/></svg>
<svg class="a" style="left:1333px;top:848px" width="5" height="7"><path d="M.5 0 V7 L4.5 3.5Z" fill="#666"/></svg>
<div class="a" style="left:599px;top:845px;width:565px;height:14px;border:1px solid #c4c4c4;border-top:0;background:linear-gradient(#f2f2f2 0,#e6e6e6 40%,#cfcfcf 60%,#dadada 100%)"><div class="a" style="left:278px;top:4px;width:7px;height:6px;background:repeating-linear-gradient(90deg,#444 0 1px,transparent 1px 3px)"></div></div>

<!-- ======= RIGHT ======= -->
<svg class="a" style="left:1346px;top:158px" width="206" height="40" viewBox="1346 158 206 40"><defs><linearGradient id="pt3" x1="0" y1="0" x2="1" y2="0"><stop offset="0" stop-color="#68409a"/><stop offset=".4" stop-color="#8456a4"/><stop offset="1" stop-color="#c48cbc"/></linearGradient></defs>
<path d="M1434.5 195.5 V167 Q1434.5 162 1439.5 162 L1485 162 Q1490 162 1490 167 V195.5" fill="#f0f0ee" stroke="#666" stroke-width="1"/>
<path d="M1350 195.5 L1384.5 161.5 L1430 161.5 Q1434 161.5 1434 165 L1434 195.5Z" fill="url(#pt3)" stroke="#3c8ad8" stroke-width="1"/>
<circle cx="1407" cy="178.5" r="13.3" fill="#f0ec30" stroke="#111" stroke-width="1"/><rect x="1404.6" y="167.5" width="4.8" height="14.5" fill="#000"/><circle cx="1407" cy="186.5" r="2.6" fill="#000"/>
<path d="M1462.5 166 L1476 193 L1449 193Z" fill="#f4dc2c" stroke="#d8b81c" stroke-width="1" stroke-linejoin="round"/><path d="M1450 193.5 H1475" stroke="#b0301c" stroke-width="1"/><rect x="1460.6" y="174" width="3.8" height="10" rx="1.5" fill="#111"/><circle cx="1462.5" cy="188" r="2.2" fill="#111"/>
</svg>
<div class="a" style="left:1348px;top:195px;width:204px;height:341px;background:#fff"></div>
<div class="a" style="left:1348px;top:195px;width:204px;height:251px;background:#fff;border:1px solid #3c84c8"></div>
<div class="a" style="left:1351px;top:195px;width:84px;height:1px;background:#c888c0"></div>
<div class="a" style="left:1349px;top:196px;width:202px;height:2px;background:linear-gradient(#a8a2a2 0 1px,#666 1px 2px)"></div>
<div class="a" style="left:1349px;top:196px;width:2px;height:247px;background:linear-gradient(90deg,#a8a2a2 0 1px,#666 1px 2px)"></div>
<div class="a" style="left:1351px;top:443px;width:199px;height:1px;background:#e4e4e4"></div>
<div class="a" style="left:1549px;top:198px;width:1px;height:246px;background:#e4e4e4"></div>
<div class="t" style="left:1352px;top:200.2px;font-size:11px;letter-spacing:0.9px">-试验...</div>
<div class="t" style="left:1352px;top:215.0px;font-size:11px;letter-spacing:0.6px">-执行 (入口力:0N)</div>
<div class="t" style="left:1352px;top:229.8px;font-size:11px;letter-spacing:0.3px">-摆锤冲击</div>
<div class="t" style="left:1352px;top:244.6px;font-size:11px;letter-spacing:0.9px">-结束...</div>
<div class="t" style="left:1359px;top:455px;font-size:11px">摆锤冲击 (自动试验)</div>
<div class="btn" style="left:1349px;top:471px;width:202px;height:32px;font-size:12px;"><span>已解锁</span></div>
<div class="panel" style="left:1348px;top:505px;width:204px;height:31px;border-left:1px solid #8a8a8a;border-top:1px solid #b0b0b0"><div class="t" style="left:0;right:0;top:7px;text-align:center;font-size:16px;color:#a4c2e2;transform:scaleX(.92)">150.03°</div></div>
<div class="a" style="left:1348px;top:536px;width:204px;height:327px;background:#fbfbe4"></div>
<div class="t" style="left:1349px;top:551px;font-size:11px">已装试样:</div>
<div class="t" style="left:1455px;top:550px;font-size:11.5px">能量(450.461):</div>
<div class="t" style="left:1353px;top:572.5px;font-size:12px">3/3</div>
<div class="a" style="left:1388px;top:570px;width:59px;height:19px;background:#fff;border:1px solid #6a9ad0;border-bottom-color:#dfe8f2;border-right-color:#a8c4e4"><div class="t" style="left:2px;top:4.5px;font-size:12px">3</div></div>
<div class="a" style="left:1454px;top:570px;width:55px;height:19px;background:#eeeeee;border:1px solid #b4b4b4"><div class="t" style="left:2px;top:3px;font-size:11.5px;color:#80808c">-150</div></div>
<div class="t" style="left:1513.5px;top:572.5px;font-size:12px">°</div>
<div class="btn" style="left:1349px;top:592px;width:98px;height:24px;font-size:11px;"><span>修改</span></div>
<div class="a" style="left:1454px;top:591px;width:55px;height:19px;background:#fff;border:1px solid #6a9ad0;border-bottom-color:#dce8f4;border-right-color:#a8c4e4"><div class="t" style="left:1.5px;top:4px;font-size:11.5px">0.0</div></div>
<div class="t" style="left:1513.5px;top:595.5px;font-size:12px">°</div>
<div class="btn" style="left:1349px;top:620px;width:98px;height:24px;font-size:11px;"><span>装样</span></div>
<div class="btn" style="left:1453px;top:620px;width:98px;height:24px;font-size:11px;"><span>修改</span></div>
<div class="btn" style="left:1349px;top:647px;width:98px;height:49px;font-size:11px;"><span>停止装样</span></div>
<div class="btn" style="left:1453px;top:647px;width:98px;height:49px;font-size:11px;"><span>取摆</span></div>
<div class="btn" style="left:1349px;top:699px;width:98px;height:50px;font-size:11px;background:#f4f4f4;border-color:#cfcfcf;color:#444"><span>暂停</span></div>
<div class="btn" style="left:1453px;top:699px;width:98px;height:50px;font-size:11px;"><span>放摆</span></div>
<div class="btn" style="left:1349px;top:751px;width:98px;height:50px;font-size:11px;"><span></span></div>
<svg class="a" style="left:1383px;top:760px" width="32" height="32" viewBox="0 0 32 32"><path d="M2 1.5 L29.5 15.5 L2 29.5Z" fill="#38ac2e" stroke="#2e8a26" stroke-width="1"/></svg>
<div class="btn" style="left:1453px;top:751px;width:98px;height:50px;font-size:11px;"><span>冲击</span></div>
<div class="btn" style="left:1349px;top:805px;width:23px;height:57px;font-size:11px;font-size:9px"><span>&lt;</span></div>
<div class="a" style="left:1375px;top:805px;width:176px;height:57px;background:#f4f4f4;border:1px solid #d0d0d0;border-radius:3px"></div>
<div class="a" style="left:1448px;top:820px;width:28px;height:27px;background:#a9a9a9;border:1px solid #8c8c8c"></div>

<!-- ======= STATUS ======= -->
<div class="a" style="left:0;top:863px;width:1552px;height:46px;background:linear-gradient(#fdf8f4 0 3px,#ebebed 3px 45px,#f4f0f0 45px 46px)"></div>
<div class="sb" style="left:8px;width:378px"></div>
<div class="a" style="left:82px;top:866px;width:1px;height:42px;background:#e4eef4"></div>
<div class="a" style="left:8px;top:886px;width:74px;height:1px;background:#e8e8e8"></div>
<div class="sbl" style="left:44.25px;top:871.5px">力</div>
<div class="sbl" style="left:44.25px;top:892.8px;font-size:11px;font-weight:bold;color:#1e8a3c">N</div>
<div class="sbv" style="left:161px;width:108px">−63.&#8201;755</div>
<div class="t" style="left:359.5px;top:883px;font-size:11px">清零</div>
<div class="sb" style="left:395px;width:378px"></div>
<div class="a" style="left:469px;top:866px;width:1px;height:42px;background:#e4eef4"></div>
<div class="a" style="left:395px;top:886px;width:74px;height:1px;background:#e8e8e8"></div>
<div class="sbl" style="left:431.0px;top:871.5px">角度</div>
<div class="sbl" style="left:431.0px;top:892.8px;font-size:11px;font-weight:normal;color:#1e8a3c">°</div>
<div class="sbv" style="left:547.5px;width:107.5px">−150.&#8201;03</div>
<div class="t" style="left:746.5px;top:883px;font-size:11px">清零</div>
<div class="sb" style="left:781px;width:378px"></div>
<div class="a" style="left:855px;top:866px;width:1px;height:42px;background:#e4eef4"></div>
<div class="a" style="left:781px;top:886px;width:74px;height:1px;background:#e8e8e8"></div>
<div class="sbl" style="left:817.25px;top:871.5px">势能</div>
<div class="sbl" style="left:817.25px;top:892.8px;font-size:11px;font-weight:bold;color:#111">J</div>
<div class="sbv" style="left:942.5px;width:92.0px">450.&#8201;46</div>
<div class="t" style="left:1132.5px;top:883px;font-size:11px">清零</div>
<div class="sb" style="left:1167px;width:377px"></div>
<div class="a" style="left:1241px;top:866px;width:1px;height:42px;background:#e4eef4"></div>
<div class="a" style="left:1167px;top:886px;width:74px;height:1px;background:#e8e8e8"></div>
<div class="sbl" style="left:1203.0px;top:871.5px">温度</div>
<div class="sbl" style="left:1203.0px;top:892.8px;font-size:11px;font-weight:normal;color:#111">℃</div>
<div class="sbv" style="left:1321px;width:106.5px">−59.&#8201;000</div>
<div class="t" style="left:1517.5px;top:883px;font-size:11px">清零</div>
<div class="a" style="left:0;top:158px;width:1px;height:708px;background:#606468"></div>

</body></html>
